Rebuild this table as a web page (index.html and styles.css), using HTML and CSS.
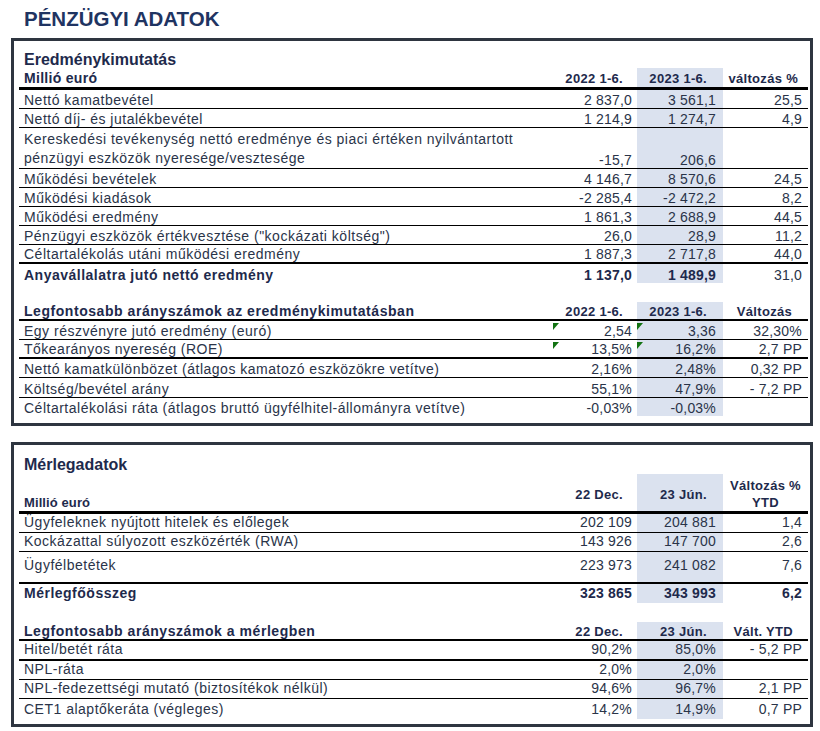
FILE: index.html
```html
<!DOCTYPE html>
<html lang="hu">
<head>
<meta charset="utf-8">
<title>Pénzügyi adatok</title>
<link rel="stylesheet" href="styles.css">
</head>
<body>
<h1 class="page-title">PÉNZÜGYI ADATOK</h1>

<section class="box box-income">
  <table class="fin">
    <colgroup><col class="c-label"><col class="c-a"><col class="c-b"><col class="c-c"></colgroup>
    <tr class="r-title"><td colspan="4">Eredménykimutatás</td></tr>
    <tr class="r-head">
      <td class="lbl">Millió euró</td>
      <td class="num ha">2022 1-6.</td>
      <td class="num hl hb">2023 1-6.</td>
      <td class="num hc">változás %</td>
    </tr>
    <tr><td>Nettó kamatbevétel</td><td class="num">2 837,0</td><td class="num hl">3 561,1</td><td class="num">25,5</td></tr>
    <tr><td>Nettó díj- és jutalékbevétel</td><td class="num">1 214,9</td><td class="num hl">1 274,7</td><td class="num">4,9</td></tr>
    <tr class="r-two"><td class="wrap">Kereskedési tevékenység nettó eredménye és piaci értéken nyilvántartott<br>pénzügyi eszközök nyeresége/vesztesége</td><td class="num">-15,7</td><td class="num hl">206,6</td><td class="num"></td></tr>
    <tr><td>Működési bevételek</td><td class="num">4 146,7</td><td class="num hl">8 570,6</td><td class="num">24,5</td></tr>
    <tr><td>Működési kiadások</td><td class="num">-2 285,4</td><td class="num hl">-2 472,2</td><td class="num">8,2</td></tr>
    <tr><td>Működési eredmény</td><td class="num">1 861,3</td><td class="num hl">2 688,9</td><td class="num">44,5</td></tr>
    <tr><td>Pénzügyi eszközök értékvesztése ("kockázati költség")</td><td class="num">26,0</td><td class="num hl">28,9</td><td class="num">11,2</td></tr>
    <tr class="r-thick"><td>Céltartalékolás utáni működési eredmény</td><td class="num">1 887,3</td><td class="num hl">2 717,8</td><td class="num">44,0</td></tr>
    <tr class="r-last r-bold"><td>Anyavállalatra jutó nettó eredmény</td><td class="num">1 137,0</td><td class="num hl">1 489,9</td><td class="num reg">31,0</td></tr>
    <tr class="r-spacer"><td colspan="4"></td></tr>
    <tr class="r-head2">
      <td class="lbl">Legfontosabb arányszámok az eredménykimutatásban</td>
      <td class="num ha">2022 1-6.</td>
      <td class="num hl hb">2023 1-6.</td>
      <td class="num hc2">Változás</td>
    </tr>
    <tr><td>Egy részvényre jutó eredmény (euró)</td><td class="num flag">2,54</td><td class="num hl flag">3,36</td><td class="num">32,30%</td></tr>
    <tr class="r-thick"><td>Tőkearányos nyereség (ROE)</td><td class="num flag">13,5%</td><td class="num hl flag">16,2%</td><td class="num">2,7 PP</td></tr>
    <tr><td>Nettó kamatkülönbözet (átlagos kamatozó eszközökre vetítve)</td><td class="num">2,16%</td><td class="num hl">2,48%</td><td class="num">0,32 PP</td></tr>
    <tr class="r-20"><td>Költség/bevétel arány</td><td class="num">55,1%</td><td class="num hl">47,9%</td><td class="num">- 7,2 PP</td></tr>
    <tr class="r-last r-18"><td>Céltartalékolási ráta (átlagos bruttó ügyfélhitel-állományra vetítve)</td><td class="num">-0,03%</td><td class="num hl">-0,03%</td><td class="num"></td></tr>
  </table>
</section>

<section class="box box-balance">
  <table class="fin fin-balance">
    <colgroup><col class="c-label"><col class="c-a"><col class="c-b"><col class="c-c"></colgroup>
    <tr class="r-title r-title2"><td colspan="4">Mérlegadatok</td></tr>
    <tr class="r-head r-headtall">
      <td class="lbl small">Millió euró</td>
      <td class="num ha mid">22 Dec.</td>
      <td class="num hl hb mid">23 Jún.</td>
      <td class="ctr">Változás %<br>YTD</td>
    </tr>
    <tr><td>Ügyfeleknek nyújtott hitelek és előlegek</td><td class="num">202 109</td><td class="num hl">204 881</td><td class="num">1,4</td></tr>
    <tr><td>Kockázattal súlyozott eszközérték (RWA)</td><td class="num">143 926</td><td class="num hl">147 700</td><td class="num">2,6</td></tr>
    <tr class="r-thick r-tall"><td>Ügyfélbetétek</td><td class="num">223 973</td><td class="num hl">241 082</td><td class="num">7,6</td></tr>
    <tr class="r-last r-bold"><td>Mérlegfőösszeg</td><td class="num">323 865</td><td class="num hl">343 993</td><td class="num">6,2</td></tr>
    <tr class="r-spacer"><td colspan="4"></td></tr>
    <tr class="r-head2">
      <td class="lbl">Legfontosabb arányszámok a mérlegben</td>
      <td class="num ha">22 Dec.</td>
      <td class="num hl hb">23 Jún.</td>
      <td class="num hc3">Vált. YTD</td>
    </tr>
    <tr class="r-thick r-20"><td>Hitel/betét ráta</td><td class="num">90,2%</td><td class="num hl">85,0%</td><td class="num">- 5,2 PP</td></tr>
    <tr><td>NPL-ráta</td><td class="num">2,0%</td><td class="num hl">2,0%</td><td class="num"></td></tr>
    <tr><td>NPL-fedezettségi mutató (biztosítékok nélkül)</td><td class="num">94,6%</td><td class="num hl">96,7%</td><td class="num">2,1 PP</td></tr>
    <tr class="r-last r-20"><td>CET1 alaptőkeráta (végleges)</td><td class="num">14,2%</td><td class="num hl">14,9%</td><td class="num">0,7 PP</td></tr>
  </table>
</section>
</body>
</html>
```

FILE: styles.css
```css
* { box-sizing: border-box; }

body {
  margin: 0;
  background: #ffffff;
  font-family: "Liberation Sans", Arial, sans-serif;
  color: #2a3449;
}

.page-title {
  margin: 7px 0 0 24px;
  font-size: 20.5px;
  line-height: 24px;
  font-weight: bold;
  color: #1f3462;
}

.box {
  margin: 7px 0 0 11px;
  width: 802px;
  border: 3px solid #2e3540;
  padding: 0 2px 7px 5px;
}

.box-balance {
  margin-top: 16px;
  padding-bottom: 5px;
}

.fin {
  width: 789px;
  table-layout: fixed;
  border-collapse: separate;
  border-spacing: 0;
}

.c-label { width: 534px; }
.c-a { width: 84px; }
.c-b { width: 86px; }
.c-c { width: 85px; }

.fin td {
  box-sizing: border-box;
  height: 19px;
  padding: 0;
  font-size: 14px;
  line-height: 15px;
  letter-spacing: 0.5px;
  vertical-align: bottom;
  white-space: nowrap;
  border-bottom: 1px solid #000;
}

.fin td:first-child { padding-left: 5px; }

.fin td.num {
  text-align: right;
  padding-right: 5px;
  letter-spacing: 0.2px;
  position: relative;
}

.fin td.num.hl { padding-right: 7px; }
.fin tr td.num:last-child { padding-right: 6px; }

.hl { background: #dbe2ef; }

/* title rows */
.fin .r-title td {
  height: 27px;
  border-bottom: none;
  font-size: 16px;
  line-height: 16px;
  font-weight: bold;
  letter-spacing: 0;
  color: #1e2a4c;
}

.fin .r-title2 td {
  height: 29px;
  padding-bottom: 1px;
}

/* header rows */
.fin .r-head td {
  height: 22px;
  border-bottom: 3px solid #000;
  padding-bottom: 1px;
  font-weight: bold;
  font-size: 13px;
  letter-spacing: 0.3px;
  color: #1e2a4c;
}

.fin .r-head td.lbl {
  font-size: 14px;
  letter-spacing: 0.3px;
}

.fin .r-headtall td {
  height: 39px;
  padding-bottom: 0;
}

.fin .r-headtall td.lbl.small {
  font-size: 13px;
  letter-spacing: 0.1px;
  padding-bottom: 1px;
}

.fin .r-head2 td {
  height: 19px;
  border-bottom: 2px solid #000;
  font-weight: bold;
  font-size: 13px;
  letter-spacing: 0.3px;
  color: #1e2a4c;
}

.fin .r-head2 td.lbl {
  font-size: 14px;
  letter-spacing: 0.55px;
}

.fin td.num.ha { padding-right: 14px; }
.fin td.num.hb { padding-right: 16px; }
.fin tr td.num.hc { padding-right: 10px; }
.fin tr td.num.hc2 { padding-right: 16px; }
.fin tr td.num.hc3 { padding-right: 15px; }

.fin td.mid {
  vertical-align: middle;
  padding-top: 4px;
}

.fin td.ctr {
  text-align: center;
  vertical-align: middle;
  padding-top: 3px;
  line-height: 17px;
  white-space: normal;
}

/* data rows */
.fin .r-two td { height: 41px; }
.fin .r-two td.wrap {
  white-space: normal;
  line-height: 19px;
}

.fin .r-thick td { border-bottom-width: 2px; }

.fin .r-last td { border-bottom: none; }

.fin .r-bold td {
  font-weight: bold;
  color: #1e2a4c;
}
.fin .r-bold td.reg { font-weight: normal; color: #2a3449; }

.fin .r-20 td { height: 20px; }
.fin .r-18 td { height: 18px; }

.fin .r-tall td {
  height: 32px;
  vertical-align: middle;
  padding-bottom: 3px;
}

.fin .r-spacer td {
  height: 19px;
  border-bottom: none;
}

/* second box: text sits a little higher in its rows */
.fin-balance tr:not(.r-title):not(.r-head):not(.r-head2):not(.r-tall):not(.r-spacer) td {
  padding-bottom: 2px;
}
.fin-balance tr.r-last.r-20 td { padding-bottom: 3px; }
.fin-balance tr.r-bold td { padding-bottom: 3px; }

/* green corner markers */
.flag::before {
  content: "";
  position: absolute;
  top: 2px;
  left: 0;
  width: 0;
  height: 0;
  border-top: 7px solid #137313;
  border-right: 6px solid transparent;
}
```
